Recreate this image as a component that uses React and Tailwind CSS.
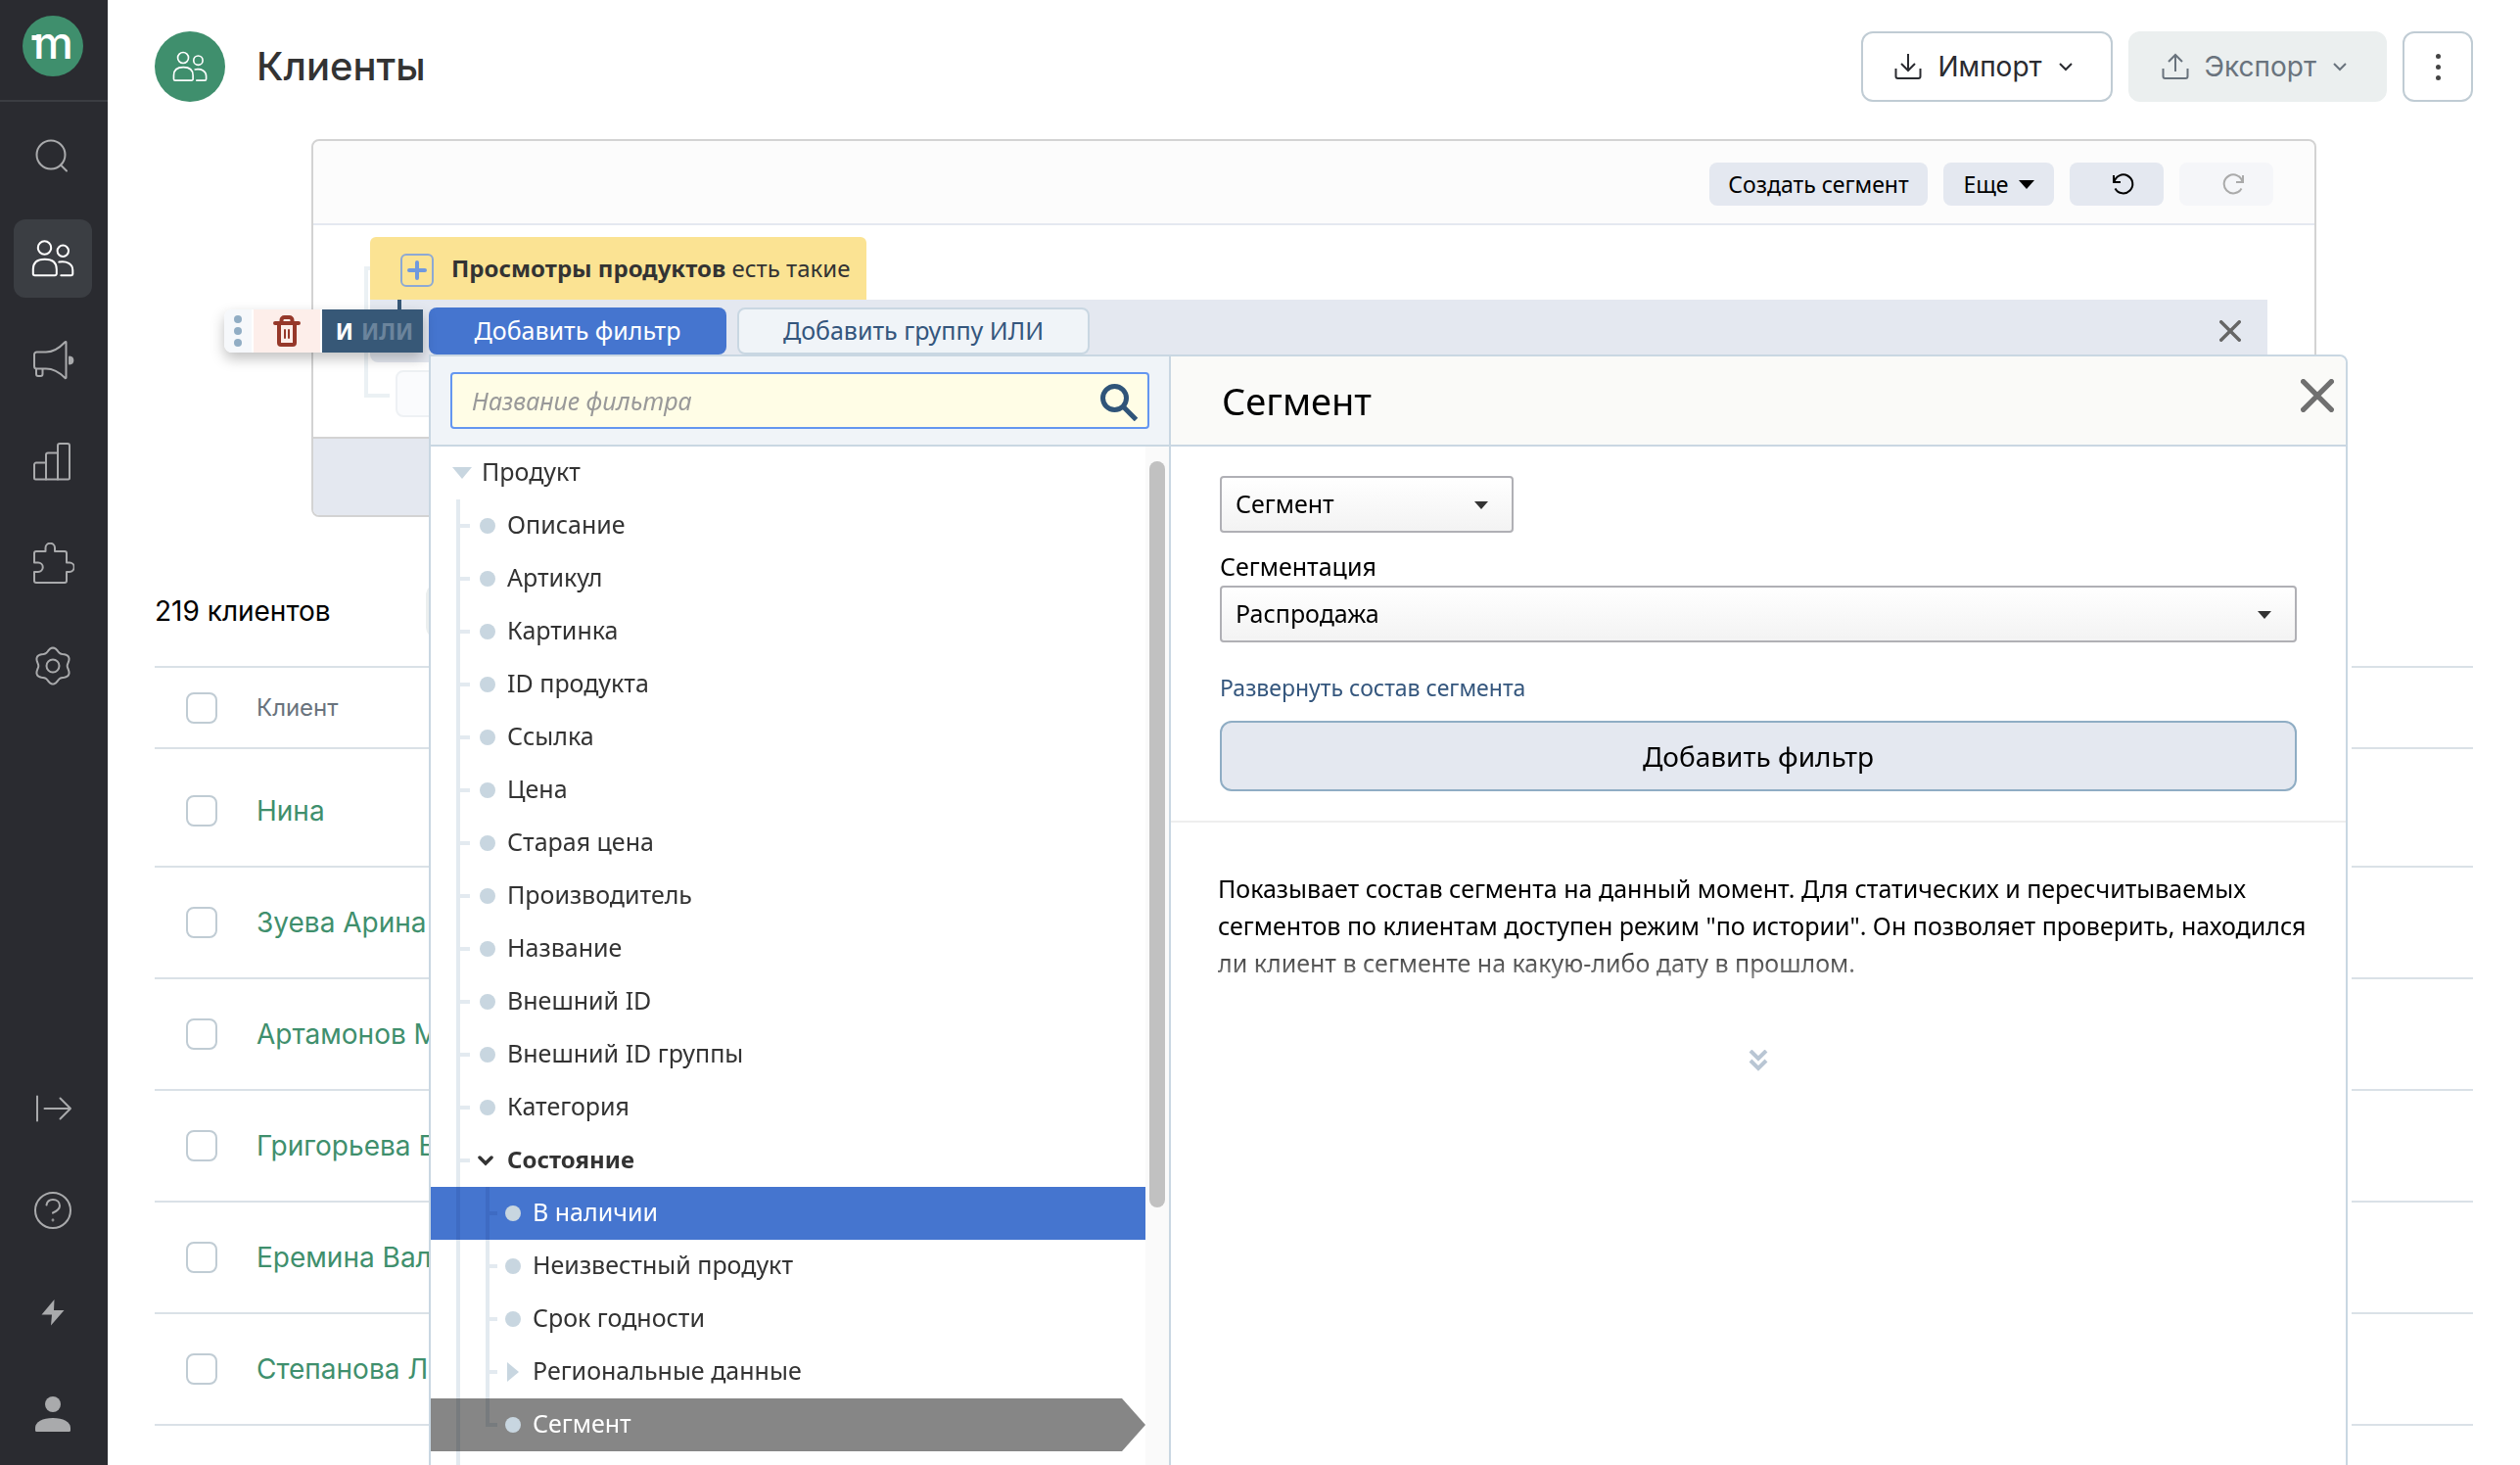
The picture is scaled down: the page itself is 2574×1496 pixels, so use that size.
import { useState } from 'react'

const gearPath =
  Array.from({ length: 72 }, (_, i) => {
    const a = (i / 72) * Math.PI * 2
    const r = 16.6 + 1.9 * Math.cos(6 * a)
    return (i ? 'L' : 'M') + (22 + r * Math.sin(a)).toFixed(2) + ' ' + (22 - r * Math.cos(a)).toFixed(2)
  }).join('') + 'Z'

function Icon({ children, className = 'size-11 stroke-2' }) {
  return (
    <svg viewBox="0 0 44 44" fill="none" stroke="currentColor" strokeLinecap="round" strokeLinejoin="round" className={className} aria-hidden="true">
      {children}
    </svg>
  )
}

const usersShape = (
  <>
    <circle cx="13.5" cy="11" r="6.7" />
    <circle cx="32.3" cy="14.3" r="5.7" />
    <path d="M1.8 37.5V33C1.8 26 6 22.8 13.8 22.8S25.8 26 25.8 33v4.5a1.8 1.8 0 0 1-1.8 1.8H3.6a1.8 1.8 0 0 1-1.8-1.8z" />
    <path d="M28.3 25.6c8-1.4 14 2 14 8.4v3.5a1.8 1.8 0 0 1-1.8 1.8H30.3" />
  </>
)

const topNav = [
  { label: 'Поиск', icon: <><circle cx="20" cy="20" r="14.5" /><path d="M30 30.5l6 6" /></> },
  { label: 'Клиенты', icon: usersShape, active: true },
  { label: 'Кампании', icon: <><path d="M3 16a2.5 2.5 0 0 1 2.5-2.500H15c7 0 14-4.500 19.500-10.300.4-.4 1-.2 1 .4v36c0 .6-.6.8-1 .4C29 34.500 22 30.500 15 30.500H5.500A2.500 2.500 0 0 1 3 28z" /><path d="M5 31v5a2 2 0 0 0 2 2h2.500a2 2 0 0 0 2-2v-5" /><path d="M39 18.500c4.500.5 4.500 6.500 0 7z" fill="currentColor" /></> },
  { label: 'Отчеты', icon: <><path d="M3 24.500a2 2 0 0 1 2-2h10V14.500a2 2 0 0 1 2-2h10V5a2 2 0 0 1 2-2h8a2 2 0 0 1 2 2v33a1.500 1.500 0 0 1-1.500 1.500h-33A1.500 1.500 0 0 1 3 38z" /><path d="M15 22.500v17M27 12.500v27" /></> },
  { label: 'Интеграции', icon: <path d="M3 11a2 2 0 0 1 2-2h9.500V5.500a4.700 4.700 0 0 1 9.500 0V9H34a2 2 0 0 1 2 2v9.500h3a4.700 4.700 0 0 1 0 9.500h-3v9a2 2 0 0 1-2 2H5a2 2 0 0 1-2-2v-9h4a4.700 4.700 0 0 0 0-9.500H3z" /> },
  { label: 'Настройки', icon: <><path d={gearPath} /><circle cx="22" cy="22" r="6.5" /></> },
]

const bottomNav = [
  { label: 'Развернуть', icon: <path d="M6 9.500v25M13.500 22H40M29.500 11.500L40 22 29.500 32.500" /> },
  { label: 'Помощь', icon: <><circle cx="22" cy="22" r="18" /><path d="M15.500 16.500c.6-3.400 3-5.400 6.500-5.400 4 0 7 2.500 7 6.200 0 4-3.500 5.700-7 7.200v.3" /><circle cx="22" cy="32" r=".4" /></> },
  { label: 'Быстрые действия', icon: <path d="M23.500 9L10.500 24.500H21l-1 11L33.500 20H23z" fill="currentColor" stroke="none" /> },
  { label: 'Профиль', icon: <><circle cx="22" cy="12" r="8" fill="currentColor" stroke="none" /><path d="M4 36c0-6 7.500-10 18-10s18 4 18 10v2.500a1.500 1.500 0 0 1-1.500 1.500h-33A1.500 1.500 0 0 1 4 38.500z" fill="currentColor" stroke="none" /></> },
]

const clients = ['Нина', 'Зуева Арина', 'Артамонов М', 'Григорьева Е', 'Еремина Вал', 'Степанова Л']

const filters = [
  { name: 'Описание' },
  { name: 'Артикул' },
  { name: 'Картинка' },
  { name: 'ID продукта' },
  { name: 'Ссылка' },
  { name: 'Цена' },
  { name: 'Старая цена' },
  { name: 'Производитель' },
  { name: 'Название' },
  { name: 'Внешний ID' },
  { name: 'Внешний ID группы' },
  { name: 'Категория' },
  { name: 'Состояние', open: true },
  { name: 'В наличии', nested: true, hover: true },
  { name: 'Неизвестный продукт', nested: true },
  { name: 'Срок годности', nested: true },
  { name: 'Региональные данные', nested: true, group: true },
  { name: 'Сегмент', nested: true, selected: true, last: true },
]

function NavButton({ item }) {
  return (
    <button aria-label={item.label} className={'flex size-20 items-center justify-center rounded-xl ' + (item.active ? 'bg-[#3b3e43] text-white' : 'text-[#a9aaac]')}>
      <Icon>{item.icon}</Icon>
    </button>
  )
}

function Sidebar() {
  return (
    <nav className="flex w-[110px] shrink-0 flex-col bg-[#2a2b30]">
      <a href="#" aria-label="Главная" className="flex h-[104px] items-start justify-center border-b-2 border-[#3b3d42] pt-4 pr-0.5">
        <svg viewBox="0 0 62 62" className="size-[62px]">
          <circle cx="31" cy="31" r="31" fill="#3f8f6d" />
          <rect x="9.5" y="20" width="7" height="5" fill="#fff" />
          <text x="31.5" y="44" textAnchor="middle" fill="#fff" fontSize="46" fontWeight="500" fontFamily="Inter, sans-serif">m</text>
        </svg>
      </a>
      <div className="flex flex-1 flex-col items-center justify-between pt-4 pr-0.5 pb-3">
        <div className="flex flex-col gap-6">
          {topNav.map((item) => <NavButton key={item.label} item={item} />)}
        </div>
        <div className="flex flex-col gap-6">
          {bottomNav.map((item) => <NavButton key={item.label} item={item} />)}
        </div>
      </div>
    </nav>
  )
}

function Chevron() {
  return (
    <svg viewBox="0 0 16 16" fill="none" stroke="currentColor" strokeWidth="2" className="size-4" aria-hidden="true">
      <path d="M2 5l6 6 6-6" />
    </svg>
  )
}

function Header() {
  return (
    <header className="flex items-center gap-4">
      <div className="flex size-[72px] items-center justify-center rounded-full bg-[#3f8f6d] text-white">
        <Icon className="size-9 stroke-2">{usersShape}</Icon>
      </div>
      <h1 className="ml-4 flex-1 text-[40px] leading-[48px] font-medium text-[#333]">Клиенты</h1>
      <button className="flex h-[72px] items-center gap-4 rounded-xl border-2 border-[#c0ccd4] pr-[38px] pl-8 text-[28px] text-[#2a2b30]">
        <svg viewBox="0 0 28 28" fill="none" stroke="currentColor" strokeWidth="2" className="size-7" aria-hidden="true">
          <path d="M14 1v17M7 11l7 7 7-7M1.5 16v8a2 2 0 0 0 2 2h21a2 2 0 0 0 2-2v-8" />
        </svg>
        Импорт
        <Chevron />
      </button>
      <button disabled className="flex h-[72px] items-center gap-4 rounded-xl border-2 border-[#ebefef] bg-[#ebefef] pr-[38px] pl-8 text-[28px] text-[#69737d]">
        <svg viewBox="0 0 28 28" fill="none" stroke="currentColor" strokeWidth="2" className="size-7" aria-hidden="true">
          <path d="M14 19V2M7 9l7-7 7 7M1.5 16v8a2 2 0 0 0 2 2h21a2 2 0 0 0 2-2v-8" />
        </svg>
        Экспорт
        <Chevron />
      </button>
      <button aria-label="Ещё действия" className="flex size-[72px] flex-col items-center justify-center gap-1 rounded-xl border-2 border-[#c0ccd4]">
        <span className="size-[5px] rounded-full bg-[#444]" />
        <span className="my-0.5 size-[5px] rounded-full bg-[#444]" />
        <span className="size-[5px] rounded-full bg-[#444]" />
      </button>
    </header>
  )
}

function Cross({ className }) {
  return (
    <svg viewBox="0 0 32 32" fill="none" stroke="currentColor" strokeWidth="5" strokeLinecap="round" className={className} aria-hidden="true">
      <path d="M2.5 2.5l27 27M29.5 2.5l-27 27" />
    </svg>
  )
}

function Toolbar() {
  return (
    <div className="flex h-[86px] items-center justify-end gap-4 rounded-t-lg border-b-2 border-[#e4e8f0] bg-[#fcfcfc] pt-1 pr-[42px] text-[23px] text-black">
      <button className="h-11 w-[223px] rounded-lg bg-[#e4e8f0]">Создать сегмент</button>
      <button className="flex h-11 w-[113px] items-center justify-center gap-2.5 rounded-lg bg-[#e4e8f0]">
        Еще
        <svg viewBox="0 0 16 10" className="h-2.5 w-4" aria-hidden="true"><path d="M0 1h16l-8 9z" fill="currentColor" /></svg>
      </button>
      <button aria-label="Отменить" className="flex h-11 w-24 items-center justify-center rounded-lg bg-[#e4e8f0] pl-3.5">
        <svg viewBox="0 0 24 24" fill="none" stroke="currentColor" strokeWidth="2" className="size-6" aria-hidden="true">
          <path d="M2 3v7h7M2.5 10A9.5 9.5 0 1 1 3.500 16.500" />
        </svg>
      </button>
      <button aria-label="Повторить" disabled className="flex h-11 w-24 items-center justify-center rounded-lg bg-[#f5f6f9] pl-3.5 text-[#aaa]">
        <svg viewBox="0 0 24 24" fill="none" stroke="currentColor" strokeWidth="2" className="size-6" aria-hidden="true">
          <path d="M22 3v7h-7M21.500 10a9.500 9.500 0 1 0-1 6.500" />
        </svg>
      </button>
    </div>
  )
}

function RowActions() {
  return (
    <div className="absolute top-2.5 -left-[149px] flex h-11 gap-0.5 rounded-l-lg bg-white shadow-[0_6px_14px_rgba(0,0,0,0.25)]">
      <button aria-label="Переместить" className="flex w-7 flex-col items-center justify-center gap-1 rounded-l-lg bg-[#f6f8fb]">
        <span className="size-2 rounded-full bg-[#91adc4]" />
        <span className="size-2 rounded-full bg-[#91adc4]" />
        <span className="size-2 rounded-full bg-[#91adc4]" />
      </button>
      <button aria-label="Удалить" className="flex w-[68px] items-center justify-center bg-[#fdeeea] text-[#96382a]">
        <svg viewBox="0 0 28 32" fill="none" stroke="currentColor" strokeWidth="4" strokeLinecap="round" strokeLinejoin="round" className="h-8 w-7" aria-hidden="true">
          <path d="M2 8h24M8.500 7V5a3 3 0 0 1 3-3h5a3 3 0 0 1 3 3v2M6 9v19a2 2 0 0 0 2 2h12a2 2 0 0 0 2-2V9" />
          <path d="M12 15v8M16 15v8" strokeWidth="2" />
        </svg>
      </button>
      <button className="flex w-[103px] items-center justify-center gap-2 bg-[#375877] pl-1 text-[23px] font-bold text-white">
        <span>И</span>
        <span className="text-[#6b849c]">ИЛИ</span>
      </button>
    </div>
  )
}

const line = 'bg-[#e3eaf0] mix-blend-multiply'

function Marker({ item }) {
  if (item.open) {
    return (
      <svg viewBox="0 0 16 16" fill="none" stroke="currentColor" strokeWidth="3.5" strokeLinecap="round" className="mr-3.5 -ml-0.5 size-4" aria-hidden="true">
        <path d="M2 5l6 6 6-6" />
      </svg>
    )
  }
  if (item.group) {
    return <svg viewBox="0 0 16 20" className="mr-3 h-5 w-4" aria-hidden="true"><path d="M2 0l12 10L2 20z" fill="#c8d6e0" /></svg>
  }
  return <span className="mr-3 size-4 rounded-full bg-[#c8d6e0]" />
}

function FilterRow({ item }) {
  const state = item.hover
    ? 'bg-[#4575cf] text-white'
    : item.selected
      ? 'bg-[#868686] text-white [clip-path:polygon(0_0,calc(100%-24px)_0,100%_50%,calc(100%-24px)_100%,0_100%)]'
      : ''
  return (
    <li>
      <button className={'flex h-[54px] w-full items-center pl-[26px] text-left ' + state + (item.open ? ' text-[24px] font-bold' : '')}>
        <span className={'h-full w-1 ' + line} />
        {item.nested ? (
          <>
            <span className={'ml-[26px] w-1 self-start ' + line + (item.last ? ' h-[29px]' : ' h-full')} />
            <span className={'mr-2 h-1 w-2 ' + line} />
          </>
        ) : (
          <span className={'mr-2.5 h-1 w-2.5 ' + line} />
        )}
        <Marker item={item} />
        <span className="pb-0.5">{item.name}</span>
      </button>
    </li>
  )
}

function FilterTree() {
  return (
    <div className="flex flex-1">
      <ul className="flex-1 text-[25px] text-[#333]">
        <li>
          <button className="flex h-[54px] w-full items-center pl-[22px] text-left">
            <svg viewBox="0 0 20 12" className="mr-2.5 h-3 w-5" aria-hidden="true"><path d="M0 0h20l-10 12z" fill="#c8d6e0" /></svg>
            <span className="pb-0.5">Продукт</span>
          </button>
        </li>
        {filters.map((item, i) => <FilterRow key={i} item={item} />)}
        <li className="h-[54px] pl-[26px]">
          <span className={'block h-full w-1 ' + line} />
        </li>
      </ul>
      <div className="w-6 bg-[#fafafa] px-1 pt-[15px]">
        <div className="h-[762px] rounded-full bg-[#c1c1c1]" />
      </div>
    </div>
  )
}

function Select({ id, className, options, label }) {
  return (
    <div className={'relative ' + className}>
      <select id={id} aria-label={label} className="h-[58px] w-full appearance-none rounded border-2 border-[#b0b0b5] bg-linear-to-b from-white to-[#f3f3f3] px-3.5 text-[25px] text-black">
        {options.map((o) => <option key={o}>{o}</option>)}
      </select>
      <svg viewBox="0 0 14 8" className="pointer-events-none absolute top-[26px] right-[26px] h-2 w-3.5" aria-hidden="true"><path d="M0 0h14L7 8z" fill="#333" /></svg>
    </div>
  )
}

function FilterDetails() {
  return (
    <div className="pt-[30px]">
      <div className="px-[50px]">
        <Select label="Вид фильтра" className="w-[300px]" options={['Сегмент']} />
        <label htmlFor="segmentation" className="mt-4 mb-0.5 block text-[25px] leading-9 text-black">Сегментация</label>
        <Select id="segmentation" className="w-full" options={['Распродажа']} />
        <a href="#" className="mt-7 block text-[23px] leading-9 text-[#34567d]">Развернуть состав сегмента</a>
        <button className="mt-4 h-[72px] w-full rounded-xl border-2 border-[#8fadc4] bg-[#e4e8f0] text-[28px] text-black">Добавить фильтр</button>
      </div>
      <div className="mt-[30px] border-t-2 border-[#eee] pt-12 pr-5 pl-12">
        <p className="text-[25px] leading-[38px] text-black">
          Показывает состав сегмента на данный момент. Для статических и пересчитываемых<br />
          сегментов по клиентам доступен режим "по истории". Он позволяет проверить, находился<br />
          <span className="bg-linear-to-b from-[#222] to-[#888] bg-clip-text text-transparent">ли клиент в сегменте на какую-либо дату в прошлом.</span>
        </p>
        <button aria-label="Показать полностью" className="mx-auto mt-[70px] block pr-7">
          <svg viewBox="0 0 20 22" fill="none" stroke="#b9c6d4" strokeWidth="4" className="h-[22px] w-5" aria-hidden="true">
            <path d="M2 1l8 8 8-8M2 11l8 8 8-8" />
          </svg>
        </button>
      </div>
    </div>
  )
}

function FilterMenu() {
  const [query, setQuery] = useState('')
  return (
    <div className="absolute top-14 -right-[82px] left-[60px] z-10 flex rounded-tr-lg border-2 border-[#c9d7e2] bg-white shadow-[4px_0_0_#fff]">
      <div className="flex w-[756px] flex-col border-r-2 border-[#c9d7e2]">
        <div className="relative h-[92px] border-b-2 border-[#c9d7e2] bg-[#f0f4f8] px-5 pt-4">
          <input
            aria-label="Название фильтра"
            placeholder="Название фильтра"
            value={query}
            onChange={(e) => setQuery(e.target.value)}
            className="h-[58px] w-full rounded border-2 border-[#6496f0] bg-[#fffde6] px-5 text-[25px] outline-none placeholder:text-[#999] placeholder:italic"
          />
          <svg viewBox="0 0 38 38" fill="none" stroke="#2f5479" strokeWidth="5" className="absolute top-7 right-8 size-[38px]" aria-hidden="true">
            <circle cx="14.5" cy="14.5" r="12" />
            <path d="M24 24l12.5 12.5" />
          </svg>
        </div>
        <FilterTree />
      </div>
      <div className="flex-1">
        <div className="flex h-[92px] items-center justify-between rounded-tr-lg border-b-2 border-[#c9d7e2] bg-[#fafaf8] pr-3 pl-[52px]">
          <h2 className="text-[38px] leading-[48px] text-black">Сегмент</h2>
          <button aria-label="Закрыть" className="mb-2.5 text-[#707070]"><Cross className="size-[34px]" /></button>
        </div>
        <FilterDetails />
      </div>
    </div>
  )
}

function FilterCard() {
  return (
    <section className="mx-auto mt-[38px] max-w-[2048px] rounded-lg border-2 border-[#d3d3d3] font-['Noto_Sans',sans-serif]">
      <Toolbar />
      <div className="relative pt-3 pr-12 pb-5 pl-[58px]">
        <div className="absolute top-[42px] left-[52px] h-[134px] w-[26px] border-4 border-r-0 border-[#ebf1f4]" />
        <div className="relative flex h-16 w-[507px] items-center rounded-t-md bg-[#fbe393] pl-[31px] text-[24px] text-[#333]">
          <button aria-label="Добавить условие" className="mt-1 mr-[18px] flex size-[34px] shrink-0 items-center justify-center rounded-md border-2 border-[#8da9d4] text-[#7099de]">
            <svg viewBox="0 0 20 20" stroke="currentColor" strokeWidth="4" strokeLinecap="round" className="size-5" aria-hidden="true"><path d="M2 10h16M10 2v16" /></svg>
          </button>
          <p className="whitespace-nowrap"><b>Просмотры продуктов</b> есть такие</p>
        </div>
        <div className="relative flex h-16 gap-[11px] rounded-bl-lg bg-[#e4e8f0] pt-2 pr-[27px] pl-[60px] text-[25px]">
          <div className="absolute top-0 left-7 h-3 w-1 bg-[#375877]" />
          <RowActions />
          <button className="h-12 w-[304px] rounded-lg bg-[#4575cf] text-white">Добавить фильтр</button>
          <button className="h-12 w-[360px] rounded-lg border-2 border-[#c9d7e2] bg-[#f0f4f8] text-[#34567d]">Добавить группу ИЛИ</button>
          <button aria-label="Закрыть" className="ml-auto h-12 text-[#666]"><Cross className="size-[22px]" /></button>
          <FilterMenu />
        </div>
        <div className="mt-2 ml-[26px] h-12 w-[300px] rounded-lg border-2 border-[#eef1f4] bg-[#fafbfd]" />
      </div>
      <div className="h-20 rounded-b-md border-t-2 border-[#d3d3d3] bg-[#e4e8f0]" />
    </section>
  )
}

function Check({ label }) {
  return <input type="checkbox" aria-label={label} className="block size-8 appearance-none rounded-lg border-2 border-[#c0ccd4] bg-white" />
}

function ClientsTable() {
  return (
    <section>
      <div className="mt-[68px] flex h-14 items-center gap-[97px]">
        <h2 className="text-[28px] leading-9 text-black">219 клиентов</h2>
        <div className="h-14 w-40 rounded-xl bg-[#ebefef]" />
      </div>
      <table className="mt-7 w-full border-t-2 border-[#dae1e7] text-left">
        <thead>
          <tr className="h-[83px] border-b-2 border-[#dae1e7]">
            <th className="w-[104px] pl-8"><Check label="Выбрать всех" /></th>
            <th className="text-[24px] font-normal text-[#69737d]">Клиент</th>
          </tr>
        </thead>
        <tbody>
          <tr className="h-[7px]"><td colSpan="2" /></tr>
          {clients.map((name) => (
            <tr key={name} className="h-[114px] border-b-2 border-[#dae1e7]">
              <td className="pl-8"><Check label={name} /></td>
              <td><a href="#" className="text-[28px] text-[#3f8f6d]">{name}</a></td>
            </tr>
          ))}
        </tbody>
      </table>
    </section>
  )
}

export default function App() {
  return (
    <div className="flex h-screen overflow-hidden bg-white font-['Inter',sans-serif]">
      <Sidebar />
      <main className="min-w-0 flex-1 px-12 pt-8">
        <Header />
        <FilterCard />
        <ClientsTable />
      </main>
    </div>
  )
}
